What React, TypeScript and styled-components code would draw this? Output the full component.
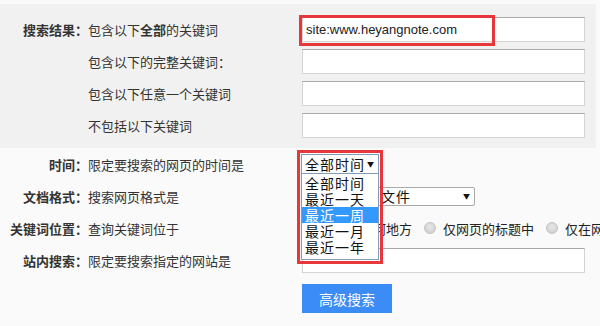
import React from "react";
import styled, { createGlobalStyle } from "styled-components";

const Global = createGlobalStyle`
  html, body { margin: 0; padding: 0; background: #fafafa; }
  body {
    font-family: "Noto Sans CJK SC", "Liberation Sans", sans-serif;
    color: #333;
    width: 600px;
    height: 326px;
    overflow: hidden;
  }
`;

const Page = styled.div`
  width: 600px;
  height: 326px;
  padding-top: 4px;
  box-sizing: border-box;
  overflow: hidden;
  background: #fafafa;
`;

const Panel = styled.div`
  width: 596px;
  background: #f1f1f1;
  padding: 13px 0 10px;
  box-sizing: border-box;
  display: flex;
  flex-direction: column;
  gap: 7px;
`;

const Row = styled.div<{ $h?: number }>`
  display: grid;
  grid-template-columns: 88px 214px 283px;
  align-items: center;
  height: ${(p) => p.$h ?? 25}px;
  font-size: 13px;
  white-space: nowrap;
`;

const Lower = styled.div`
  display: flex;
  flex-direction: column;
`;

const Label = styled.div`
  font-weight: bold;
  text-align: right;
  color: #333;
`;

const Desc = styled.div`
  color: #333;
  b { font-weight: bold; }
`;

const Cell = styled.div`
  position: relative;
  display: flex;
  align-items: center;
  height: 100%;
`;

const TextInput = styled.div`
  width: 283px;
  height: 25px;
  box-sizing: border-box;
  background: #fff;
  border: 1px solid #d4d4d4;
  border-top-color: #a8a8a8;
  font-family: "Liberation Sans", Arial, sans-serif;
  font-size: 13px;
  color: #222;
  display: flex;
  align-items: center;
  padding-left: 3px;
`;

const Annot = styled.div<{ $l: number; $t: number; $w: number; $h: number }>`
  position: absolute;
  left: ${(p) => p.$l}px;
  top: ${(p) => p.$t}px;
  width: ${(p) => p.$w}px;
  height: ${(p) => p.$h}px;
  border: 3px solid #e8373b;
  box-sizing: border-box;
  pointer-events: none;
  z-index: 5;
`;

const SelectBox = styled.div<{ $w: number; $h: number; $focus?: boolean }>`
  width: ${(p) => p.$w}px;
  height: ${(p) => p.$h}px;
  box-sizing: border-box;
  background: #fff;
  border: 1px solid ${(p) => (p.$focus ? "#7f9db9" : "#a9a9a9")};
  border-radius: ${(p) => (p.$focus ? 0 : 2)}px;
  display: flex;
  align-items: center;
  justify-content: space-between;
  padding: 0 4px 0 3px;
  font-size: 14px;
  letter-spacing: 1px;
  color: #111;
`;

const Arrow = styled.span`
  font-size: 7px;
  letter-spacing: 0;
  color: #111;
`;

const SelectWrap = styled.div`
  position: relative;
  margin-left: -1px;
`;

const ListBox = styled.div`
  position: absolute;
  left: 0;
  top: 100%;
  width: 78px;
  box-sizing: border-box;
  background: #fff;
  border: 1px solid #7f9db9;
  border-top: none;
  padding: 1px 0 4px;
  z-index: 4;
`;

const Option = styled.div<{ $active?: boolean }>`
  height: 16px;
  line-height: 16px;
  font-size: 14px;
  letter-spacing: 1px;
  padding-left: 3px;
  color: ${(p) => (p.$active ? "#fff" : "#111")};
  background: ${(p) => (p.$active ? "#3399ff" : "transparent")};
`;

const Radios = styled.div`
  display: flex;
  align-items: center;
  font-size: 13px;
  color: #222;
`;

const Radio = styled.span`
  width: 12px;
  height: 12px;
  margin-right: 7px;
  border-radius: 50%;
  border: 1px solid #c4c4c4;
  background: radial-gradient(circle at 50% 40%, #e8e8e8 0, #d2d2d2 75%);
  box-sizing: border-box;
  flex: none;
`;

const RadioLabel = styled.span`
  margin-right: 12px;
`;

const ButtonRow = styled.div`
  padding: 8px 0 0 302px;
`;

const Button = styled.button`
  width: 90px;
  height: 29px;
  border: none;
  background: #3b8cf6;
  color: #fff;
  font-family: "Noto Sans CJK SC", sans-serif;
  font-size: 14px;
  padding: 0;
`;

export default function App() {
  return (
    <Page>
      <Global />
      <Panel>
        <Row>
          <Label>搜索结果：</Label>
          <Desc>
            包含以下<b>全部</b>的关键词
          </Desc>
          <Cell>
            <TextInput>site:www.heyangnote.com</TextInput>
            <Annot $l={-3} $t={-2} $w={196} $h={31} />
          </Cell>
        </Row>
        <Row>
          <Label />
          <Desc>包含以下的完整关键词：</Desc>
          <Cell>
            <TextInput />
          </Cell>
        </Row>
        <Row>
          <Label />
          <Desc>包含以下任意一个关键词</Desc>
          <Cell>
            <TextInput />
          </Cell>
        </Row>
        <Row>
          <Label />
          <Desc>不包括以下关键词</Desc>
          <Cell>
            <TextInput />
          </Cell>
        </Row>
      </Panel>
      <Lower>
        <Row $h={32}>
          <Label>时间：</Label>
          <Desc>限定要搜索的网页的时间是</Desc>
          <Cell>
            <SelectWrap>
              <SelectBox $w={78} $h={20} $focus>
                全部时间<Arrow>▼</Arrow>
              </SelectBox>
              <ListBox>
                <Option>全部时间</Option>
                <Option>最近一天</Option>
                <Option $active>最近一周</Option>
                <Option>最近一月</Option>
                <Option>最近一年</Option>
              </ListBox>
              <Annot $l={-4} $t={-4} $w={86} $h={114} />
            </SelectWrap>
          </Cell>
        </Row>
        <Row $h={32}>
          <Label>文档格式：</Label>
          <Desc>搜索网页格式是</Desc>
          <Cell>
            <SelectBox $w={173} $h={19}>
              所有网页和文件<Arrow>▼</Arrow>
            </SelectBox>
          </Cell>
        </Row>
        <Row $h={32}>
          <Label>关键词位置：</Label>
          <Desc>查询关键词位于</Desc>
          <Cell>
            <Radios>
              <Radio />
              <RadioLabel>网页的任何地方</RadioLabel>
              <Radio />
              <RadioLabel>仅网页的标题中</RadioLabel>
              <Radio />
              <RadioLabel>仅在网页的URL中</RadioLabel>
            </Radios>
          </Cell>
        </Row>
        <Row $h={32}>
          <Label>站内搜索：</Label>
          <Desc>限定要搜索指定的网站是</Desc>
          <Cell>
            <TextInput />
          </Cell>
        </Row>
        <ButtonRow>
          <Button>高级搜索</Button>
        </ButtonRow>
      </Lower>
    </Page>
  );
}
